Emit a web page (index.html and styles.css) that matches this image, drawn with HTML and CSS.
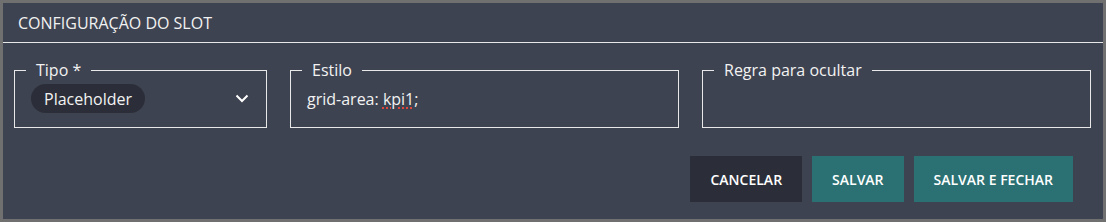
FILE: index.html
```html
<!DOCTYPE html>
<html lang="pt-BR">
<head>
    <meta charset="UTF-8">
    <meta name="viewport" content="width=device-width, initial-scale=1.0">
    <title>Configuração do slot</title>
    <link rel="stylesheet" href="styles.css">
</head>
<body>
    <div class="dialog">
        <div class="dialog-header">CONFIGURAÇÃO DO SLOT</div>

        <div class="dialog-body">
            <div class="fields">
                <fieldset class="field">
                    <legend>Tipo *</legend>
                    <div class="select">
                        <span class="chip">Placeholder</span>
                        <svg class="chevron" width="14" height="9" viewBox="0 0 14 9">
                            <polyline points="1.5,1.5 7,7 12.5,1.5" fill="none" stroke="#fff" stroke-width="2"/>
                        </svg>
                    </div>
                </fieldset>

                <fieldset class="field">
                    <legend>Estilo</legend>
                    <div class="value"><span>grid-area: <span class="typo">kpi1</span>;</span></div>
                </fieldset>

                <fieldset class="field">
                    <legend>Regra para ocultar</legend>
                    <div class="value"></div>
                </fieldset>
            </div>

            <div class="actions">
                <button class="btn btn-dark">CANCELAR</button>
                <button class="btn btn-teal">SALVAR</button>
                <button class="btn btn-teal">SALVAR E FECHAR</button>
            </div>
        </div>
    </div>
</body>
</html>
```

FILE: styles.css
```css
body {
    margin: 0;
    font-family: "Open Sans", Arial, sans-serif;
    background: #707070;
}
.dialog {
    height: 222px;
    box-sizing: border-box;
    border: 3px solid #707070;
    background: #3e4351;
    color: #f2f2f2;
}
.dialog-header {
    height: 39px;
    padding: 0 15px;
    display: flex;
    align-items: center;
    font-size: 16px;
    border-bottom: 1px solid #e8e8e8;
}
.dialog-body {
    padding: 19px 12px 0 11px;
}
.fields {
    display: grid;
    grid-template-columns: 253px 1fr 1fr;
    gap: 23px;
}
.field {
    margin: 0;
    min-width: 0;
    height: 66px;
    box-sizing: border-box;
    padding: 6px 17px 13px 16px;
    border: 1px solid #e8e8e8;
}
.field legend {
    padding: 0 10px;
    margin-left: -5px;
    font-size: 16px;
    line-height: 16px;
}
.select {
    display: flex;
    align-items: center;
    justify-content: space-between;
    height: 29px;
}
.chip {
    display: inline-flex;
    align-items: center;
    height: 29px;
    padding: 0 13px;
    border-radius: 15px;
    background: #2b2e38;
    font-size: 16px;
}
.value {
    height: 29px;
    display: flex;
    align-items: center;
    font-size: 16px;
}
.typo {
    text-decoration: underline dotted #e0463b 2px;
    text-underline-offset: 3px;
}
.actions {
    display: flex;
    justify-content: flex-end;
    gap: 10px;
    margin-top: 28px;
    padding-right: 18px;
}
.btn {
    height: 46px;
    border: none;
    padding: 0 20px;
    font-family: "Open Sans", Arial, sans-serif;
    font-size: 14px;
    font-weight: 600;
    color: #ffffff;
}
.btn-dark {
    background: #2b2e38;
}
.btn-teal {
    background: #2b7173;
}
```
